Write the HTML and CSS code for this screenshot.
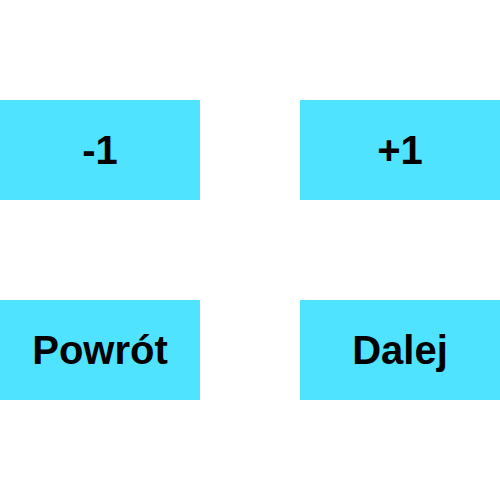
FILE: index.html
```html
<!DOCTYPE html>
<html lang="pl">

<head>
    <meta charset="UTF-8">
    <meta name="viewport" content="width=device-width, initial-scale=1.0">
    <title>Licznik</title>
    <link rel="stylesheet" href="styles.css">
</head>

<body>
    <div class="pad">
        <button class="btn">-1</button>
        <button class="btn">+1</button>
        <button class="btn">Powrót</button>
        <button class="btn">Dalej</button>
    </div>
</body>

</html>
```

FILE: styles.css
```css
* {
    margin: 0;
    padding: 0;
    box-sizing: border-box;
}

body {
    font-family: 'Liberation Sans', Arial, sans-serif;
    background-color: #ffffff;
    width: 500px;
    height: 500px;
    overflow: hidden;
}

.pad {
    display: grid;
    grid-template-columns: 200px 200px;
    grid-auto-rows: 100px;
    column-gap: 100px;
    row-gap: 100px;
    padding-top: 100px;
}

.btn {
    display: flex;
    align-items: center;
    justify-content: center;
    background: #50e3ff;
    color: #000000;
    border: none;
    font-family: 'Liberation Sans', Arial, sans-serif;
    font-size: 40px;
    font-weight: 700;
    cursor: pointer;
}
```
